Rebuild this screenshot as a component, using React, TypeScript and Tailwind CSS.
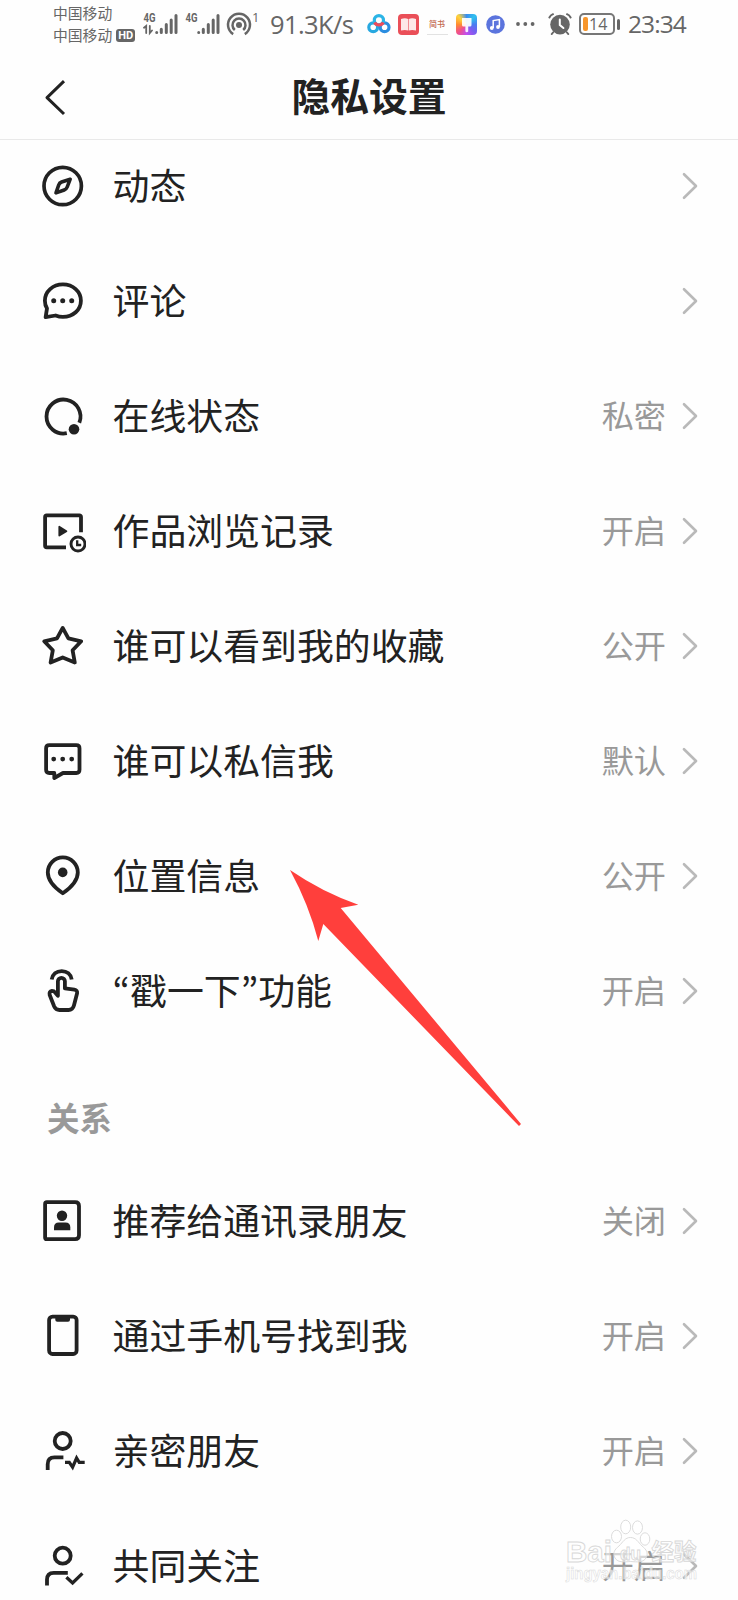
import React from 'react';

const Icon = ({ children }: React.PropsWithChildren) => (
    <svg className="w-12 h-12 flex-shrink-0" viewBox="0 0 48 48" fill="none" stroke="#222" strokeWidth="3.8" strokeLinejoin="round">
        {children}
    </svg>
);

const CompassIcon = () => (
    <Icon>
        <circle cx="24.7" cy="24" r="18.7" strokeWidth="3.7" />
        <path d="M32.2 17.2 L23.6 20 Q21.4 20.8 20.7 23 L18 30.9 L26.2 28 Q28.4 27.2 29.2 25 Z" strokeWidth="3.6" />
    </Icon>
);

const CommentIcon = () => (
    <Icon>
        <path d="M7.6 40.2 L9 31.4 C7.6 29.4 6.9 26.5 6.9 23.7 C6.9 14.5 14.8 7.4 24.9 7.4 S42.9 14.5 42.9 23.7 S35 39.9 24.9 39.9 C22.4 39.9 20.2 39.5 17.6 38.5 Z" />
        <g fill="#222" stroke="none">
            <circle cx="15.7" cy="23.7" r="2.5" />
            <circle cx="24.7" cy="23.7" r="2.5" />
            <circle cx="33.7" cy="23.7" r="2.5" />
        </g>
    </Icon>
);

const OnlineIcon = () => (
    <Icon>
        <path d="M41.3 30.8 A17 17 0 1 0 28.8 41.2" />
        <circle cx="36" cy="37.3" r="5.3" fill="#222" stroke="none" />
    </Icon>
);

const HistoryIcon = () => (
    <Icon>
        <path d="M43 25.3 V10 Q43 8.4 41.4 8.4 H8.7 Q7.1 8.4 7.1 10 V38.8 Q7.1 40.3 8.7 40.3 H28" />
        <path d="M21.3 19.8 V28.6 L28.4 24.2 Z" fill="#222" strokeWidth="1.8" />
        <circle cx="40" cy="37" r="7" strokeWidth="2.9" />
        <path d="M39.2 33.2 V38 H43.2" strokeWidth="2.3" strokeLinejoin="miter" />
    </Icon>
);

const StarIcon = () => (
    <Icon>
        <path d="M24.7 5.9 L30.4 16.4 L43.2 19.3 L34.6 28.3 L36.8 40.5 L24.7 35.4 L12.6 40.5 L14.8 28.3 L6.2 19.3 L19 16.4 Z" />
    </Icon>
);

const MessageIcon = () => (
    <Icon>
        <path d="M11.3 8.1 H38.3 Q41.5 8.1 41.5 11.3 V32.8 Q41.5 36 38.3 36 H25 L16.3 41 V36 H11.3 Q8.1 36 8.1 32.8 V11.3 Q8.1 8.1 11.3 8.1 Z" />
        <g fill="#222" stroke="none">
            <circle cx="15.7" cy="22.1" r="2.4" />
            <circle cx="24.7" cy="22.1" r="2.4" />
            <circle cx="33.7" cy="22.1" r="2.4" />
        </g>
    </Icon>
);

const PinIcon = () => (
    <Icon>
        <path d="M24.8 41.2 C18 36.5 9.8 29.5 9.8 20.4 A15 15 0 0 1 39.8 20.4 C39.8 29.5 31.6 36.5 24.8 41.2 Z" />
        <circle cx="24.7" cy="20.4" r="4.8" fill="#222" stroke="none" />
    </Icon>
);

const PokeIcon = () => (
    <Icon>
        <path d="M13.7 12.6 C14.5 7 18.5 4.1 23.7 4.1 C28.9 4.1 32.9 7 33.7 12.6" />
        <path d="M19.9 28.8 V14.3 A3.5 3.5 0 0 1 26.9 14.3 V21.4 L36.4 22.7 Q39.6 23.2 39.1 26.3 L36 38.3 Q34.8 43 30.5 43 H21.5 Q17.8 43 16.2 39.5 L11.7 28 Q10.9 24.2 13.9 23.9 Q16 23.9 17.1 25.5 Z" />
    </Icon>
);

const ContactIcon = () => (
    <Icon>
        <path d="M8.9 5.1 H37.1 Q41 5.1 41 9 V38.3 Q41 42.2 37.1 42.2 H8.9 Q7.1 42.2 7.1 40.4 V6.9 Q7.1 5.1 8.9 5.1 Z" />
        <g fill="#222" stroke="none">
            <circle cx="24" cy="18.8" r="5.2" />
            <path d="M16 33.2 V30.3 Q16 25.4 20.9 25.4 H27.4 Q32.3 25.4 32.3 30.3 V33.2 Z" />
        </g>
    </Icon>
);

const PhoneIcon = () => (
    <Icon>
        <rect x="11.1" y="4.6" width="27.5" height="37.4" rx="3.4" />
        <path d="M17.3 4.5 H32 V7.8 Q32 9.8 30 9.8 H19.3 Q17.3 9.8 17.3 7.8 Z" fill="#222" stroke="none" />
    </Icon>
);

const CloseFriendIcon = () => (
    <Icon>
        <circle cx="24.7" cy="14" r="8" />
        <path d="M9.7 43 V37.2 Q9.7 30.4 16.5 30.4 H25.4" />
        <path d="M27 35.3 H31.3 L34.6 40.2 L38.6 31 L41.2 35.3 H46.7" strokeWidth="3.2" strokeLinejoin="miter" />
    </Icon>
);

const FollowIcon = () => (
    <Icon>
        <circle cx="24.7" cy="13.7" r="8" />
        <path d="M9 43.6 V37.6 Q9 30.8 15.8 30.8 H29.8" />
        <path d="M28.4 35.2 L34.6 40.9 L44.4 31.4" strokeWidth="3.3" strokeLinejoin="miter" />
    </Icon>
);

const privacyItems = [
    { icon: <CompassIcon />, label: '动态', value: '' },
    { icon: <CommentIcon />, label: '评论', value: '' },
    { icon: <OnlineIcon />, label: '在线状态', value: '私密' },
    { icon: <HistoryIcon />, label: '作品浏览记录', value: '开启' },
    { icon: <StarIcon />, label: '谁可以看到我的收藏', value: '公开' },
    { icon: <MessageIcon />, label: '谁可以私信我', value: '默认' },
    { icon: <PinIcon />, label: '位置信息', value: '公开' },
    { icon: <PokeIcon />, label: '“戳一下”功能', value: '开启' },
];

const relationItems = [
    { icon: <ContactIcon />, label: '推荐给通讯录朋友', value: '关闭' },
    { icon: <PhoneIcon />, label: '通过手机号找到我', value: '开启' },
    { icon: <CloseFriendIcon />, label: '亲密朋友', value: '开启' },
    { icon: <FollowIcon />, label: '共同关注', value: '开启' },
];

// the SC font draws curly quotes full width, the KR one keeps them narrow
const Label = ({ text }: { text: string }) => (
    <>
        {text.split(/([“”])/).map((part, i) =>
            part === '“' || part === '”'
                ? <span key={i} className="font-['Noto_Sans_CJK_KR',sans-serif]">{part}</span>
                : part
        )}
    </>
);

const Row = ({ icon, label, value }: { icon: React.ReactNode; label: string; value: string }) => (
    <li className="flex items-center h-[115px] pl-[38px] pr-[38px]">
        {icon}
        <span className="ml-[26.5px] mb-[4px] flex-1 text-[36.9px] leading-[48px] whitespace-nowrap text-[#222]"><Label text={label} /></span>
        <span className="mb-1 text-[32.2px] leading-[48px] text-[#999] whitespace-nowrap">{value}</span>
        <svg className="ml-[14px] w-5 h-7" viewBox="0 0 20 28" fill="none" stroke="#b9b9b9" strokeWidth="2.6" strokeLinecap="round" strokeLinejoin="round">
            <path d="M4 2.2 L16 14 L4 25.8" />
        </svg>
    </li>
);

const Signal = ({ data }: { data?: boolean }) => (
    <svg className="w-9 h-6 flex-shrink-0" viewBox="0 0 36 24" fill="none" stroke="#666" strokeWidth="3" strokeLinecap="round">
        <text x="0.5" y="10" fontSize="12" fontWeight="700" fill="#666" stroke="none" textLength="12" lengthAdjust="spacingAndGlyphs" fontFamily="Roboto, sans-serif">4G</text>
        <path d="M13.7 20.5 V20.6 M18.3 17.3 V20.6 M23.3 12.5 V20.6 M28.2 8 V20.6 M33 3.4 V20.6" />
        {data && <path d="M1 15.8 L3.2 14 V21 M6.8 14 V21 L9 18.5" strokeWidth="1.8" />}
    </svg>
);

const StatusBar = () => (
    <div className="flex items-center h-12 pl-[53px] text-[#666]">
        <div className="w-[84px] flex-shrink-0 text-[14.8px] leading-[22px]">
            <div className="whitespace-nowrap">中国移动</div>
            <div className="flex items-center gap-1 whitespace-nowrap">
                中国移动
                <span className="w-[19px] h-[13px] rounded-[3px] bg-[#666] text-white text-[11px] leading-[13px] font-bold text-center font-[Roboto]">HD</span>
            </div>
        </div>
        <div className="ml-[6px]"><Signal data /></div>
        <div className="ml-[6px]"><Signal /></div>
        <svg className="ml-[5px] w-[27px] h-7 flex-shrink-0" viewBox="0 0 27 28" fill="none" stroke="#666" strokeWidth="2.5">
            <circle cx="13" cy="15" r="3" fill="#666" stroke="none" />
            <path d="M8.8 20 A6.5 6.5 0 1 1 17.2 20" />
            <path d="M7.2 24.1 A11 11 0 1 1 18.8 24.1" />
        </svg>
        <span className="-ml-px mb-[13px] w-2 font-['Open_Sans'] text-[13px] leading-none">1</span>
        <span className="ml-[10px] w-[84px] flex-shrink-0 font-['Open_Sans'] text-[25.5px] tracking-[-0.6px] whitespace-nowrap">91.3K/s</span>
        <svg className="ml-[13px] w-6 h-5 flex-shrink-0" viewBox="0 0 24 20" fill="none" strokeWidth="3.2">
            <circle cx="6.2" cy="13.3" r="4.4" stroke="#27a8e0" />
            <circle cx="17.6" cy="13.3" r="4.4" stroke="#2b8de0" />
            <circle cx="11.9" cy="6.2" r="4.6" stroke="#2bb4e6" />
            <path d="M7.6 8.5 Q9 11 11.9 11 Q14.8 11 16.3 8.5" stroke="#ee4b5a" />
        </svg>
        <svg className="ml-[6.5px] w-[21px] h-[21px] flex-shrink-0" viewBox="0 0 21 21">
            <rect width="21" height="21" rx="4" fill="#ea4f58" />
            <path d="M3 5 Q7 3.6 10.2 5 V16.5 Q7 15.4 3 16.5 Z M10.8 5 Q14 3.6 18 5 V16.5 Q14 15.4 10.8 16.5 Z" fill="#fde8e8" />
        </svg>
        <span className="ml-[8px] w-[21px] h-[21px] flex-shrink-0 border-b border-[#e2e2e2] text-center text-[8px] leading-[20px] font-medium text-[#c2674f]">简书</span>
        <span className="ml-[8px] w-[21px] h-[21px] flex-shrink-0 rounded bg-[conic-gradient(#3a8df0,#2fc0ee,#4a7cf0,#7b5cf0,#c04ff0,#f04f8c,#ff8b32,#ffd33a,#3a8df0)]">
            <svg className="w-[21px] h-[21px]" viewBox="0 0 21 21">
                <path d="M6 4 H15.5 V11 Q15.5 12.5 14 12.5 H12.2 V17.5 Q10.8 19 9.4 17.5 V12.5 H7.5 Q6 12.5 6 11 Z" fill="#fff" opacity="0.92" />
            </svg>
        </span>
        <svg className="ml-[9px] w-[19px] h-[19px] flex-shrink-0" viewBox="0 0 19 19" fill="none">
            <circle cx="9.5" cy="9.5" r="9.3" fill="#5b74dd" />
            <path d="M7.2 13 V5.6 L13.4 4.6 V12" stroke="#fff" strokeWidth="1.5" />
            <circle cx="5.8" cy="13" r="1.9" fill="#fff" />
            <circle cx="12" cy="12" r="1.9" fill="#fff" />
        </svg>
        <svg className="ml-[11px] w-[19px] h-1 flex-shrink-0" viewBox="0 0 19 4" fill="#666">
            <circle cx="2" cy="2" r="1.9" />
            <circle cx="9.3" cy="2" r="1.9" />
            <circle cx="16.6" cy="2" r="1.9" />
        </svg>
        <svg className="ml-[13.5px] w-6 h-[22px] flex-shrink-0" viewBox="0 0 24 22" fill="none" stroke="#666" strokeWidth="2" strokeLinecap="round">
            <circle cx="12" cy="11.6" r="9.8" fill="#666" stroke="none" />
            <path d="M1.4 4.4 Q2.6 2.2 5 1.2 M22.6 4.4 Q21.4 2.2 19 1.2 M5 19.5 L3.8 21 M19 19.5 L20.2 21" />
            <path d="M11.8 6.4 V12 L15.4 15" stroke="#fff" />
        </svg>
        <div className="ml-[7px] w-9 h-[22px] flex-shrink-0 rounded-[5px] border-2 border-[#777] flex items-center pl-[2px]">
            <span className="w-[5px] h-[14px] rounded-[2px] bg-[#f7952a]" />
            <span className="ml-px font-['Open_Sans'] text-[16px] leading-none">14</span>
        </div>
        <span className="ml-[2px] w-[3px] h-[11px] flex-shrink-0 rounded-sm bg-[#666]" />
        <span className="ml-[8px] font-['Open_Sans'] text-[24.5px] tracking-[-0.9px] whitespace-nowrap">23:34</span>
    </div>
);

// outlined paw logo with the site address below it
const Watermark = () => (
    <svg className="absolute left-[562px] top-[1515px] w-[145px] h-[76px]" viewBox="0 0 145 76" fill="#fff" fillOpacity="0.6" stroke="#d8d8d8" strokeWidth="0.9">
        <g fontFamily="'Liberation Sans', 'Noto Sans CJK SC', sans-serif" fontWeight="700">
            <text x="4" y="46.5" fontSize="30" textLength="46" lengthAdjust="spacingAndGlyphs">Bai</text>
            <ellipse cx="54.5" cy="21.5" rx="5" ry="6.3" />
            <ellipse cx="63.7" cy="12" rx="5" ry="6.8" />
            <ellipse cx="75.5" cy="12.5" rx="5" ry="6.6" />
            <ellipse cx="83" cy="24" rx="4.8" ry="6.2" />
            <path d="M68.5 22.5 C74 22.5 76 27 80 31 C85 35 86 38 84.5 42 C82 48 75 47 68.5 46.5 C62 47 55 48 52.5 42 C51 38 52 35 57 31 C61 27 63 22.5 68.5 22.5 Z" />
            <text x="58" y="45" fontSize="19" textLength="21" lengthAdjust="spacingAndGlyphs">du</text>
            <text x="89.5" y="45" fontSize="22.5">经验</text>
            <text x="4" y="64" fontSize="16" strokeWidth="0.5" textLength="131" lengthAdjust="spacingAndGlyphs">jingyan.baidu.com</text>
        </g>
    </svg>
);

export default function App() {
    return (
        <div className="relative w-full h-[1600px] overflow-hidden bg-[#fefefe] font-['Noto_Sans_CJK_SC',sans-serif]">
            <StatusBar />
            <header className="grid grid-cols-[100px_1fr_100px] items-center h-[92px] pt-2 border-b border-[#e9e9e9]">
                <svg className="ml-[43px] w-6 h-9" viewBox="0 0 24 36" fill="none" stroke="#222" strokeWidth="3" strokeLinejoin="round">
                    <path d="M21 1.2 L4 17.6 L21 34" />
                </svg>
                <h1 className="mb-[7px] text-center text-[38.8px] leading-[56px] font-bold text-[#222]">隐私设置</h1>
            </header>
            <main className="-mt-[11.5px]">
                <ul>
                    {privacyItems.map((item) => <Row key={item.label} {...item} />)}
                </ul>
                <h2 className="h-[115px] pt-[44px] pl-[47px] text-[32.5px] leading-[48px] font-bold text-[#999]">关系</h2>
                <ul>
                    {relationItems.map((item) => <Row key={item.label} {...item} />)}
                </ul>
            </main>
            <svg className="absolute left-[280px] top-[860px] w-[250px] h-[275px]" viewBox="0 0 250 275" fill="#ff3f3c">
                <path d="M10 10 Q42 32 78.3 44.7 L60.7 48 L241 264 L239 266 L43.3 64 L38.3 81 Q29 45 10 10 Z" />
            </svg>
            <Watermark />
        </div>
    );
}
